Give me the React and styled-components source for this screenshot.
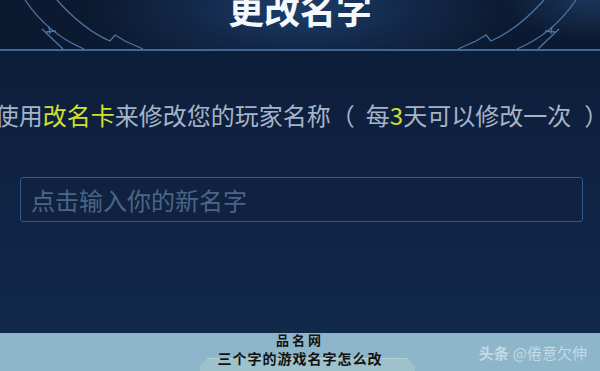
import React from 'react';
import styled, { createGlobalStyle } from 'styled-components';

const Global = createGlobalStyle`
  html, body {
    margin: 0;
    padding: 0;
    background: #0d1c35;
  }
  body {
    font-family: "Noto Sans CJK SC", "Noto Sans", sans-serif;
  }
`;

const Screen = styled.div`
  width: 600px;
  height: 371px;
  display: flex;
  flex-direction: column;
  overflow: hidden;
  background: linear-gradient(180deg, #0d1c36 0%, #0f2242 45%, #112b4c 100%);
`;

const Header = styled.header`
  position: relative;
  height: 49px;
  flex: none;
  display: flex;
  justify-content: center;
  border-bottom: 2px solid #3b6a9e;
  background:
    radial-gradient(ellipse 210px 70px at 300px 10px, #1c3d69 0%, rgba(22, 48, 86, 0.6) 55%, rgba(13, 27, 50, 0) 100%),
    radial-gradient(ellipse 90px 40px at 590px 0px, rgba(40, 80, 130, 0.5) 0%, rgba(13, 27, 50, 0) 100%),
    #0c1a31;
`;

const Ornament = styled.svg`
  position: absolute;
  left: 0;
  top: 0;
  width: 600px;
  height: 50px;
  pointer-events: none;
`;

const Title = styled.h1`
  position: relative;
  margin: -10px 0 0;
  font-size: 36px;
  line-height: 36px;
  font-weight: 700;
  color: #f4f7fb;
`;

const Body = styled.main`
  flex: 1;
  display: flex;
  flex-direction: column;
  align-items: center;
  padding-top: 49px;
`;

const Hint = styled.p`
  margin: 0 0 0 3px;
  display: flex;
  white-space: nowrap;
  font-size: 24px;
  line-height: 30px;
  color: #a5b4c8;
`;

const Mark = styled.span`
  color: #d3e02c;
`;

const Paren = styled.span`
  margin-left: ${(p) => p.$gap}px;
`;

const Field = styled.input`
  box-sizing: border-box;
  margin: 47px 0 0 3px;
  width: 563px;
  height: 45px;
  padding: 0 10px;
  border: 1.5px solid #31598a;
  border-radius: 3px;
  background: #10223f;
  font-family: inherit;
  font-size: 24px;
  color: #c9d6e6;
  outline: none;
  &::placeholder {
    color: #4b6589;
  }
`;

const Footer = styled.footer`
  position: relative;
  height: 38px;
  flex: none;
  background: #8db6ca;
  display: flex;
  flex-direction: column;
  align-items: center;
  &::before {
    content: '';
    position: absolute;
    left: 200px;
    top: 25px;
    width: 215px;
    height: 20px;
    background: #9dc2cc;
    border-top: 1px solid #b4d2d4;
    clip-path: polygon(8px 0, calc(100% - 8px) 0, 100% 8px, 100% 100%, 0 100%, 0 8px);
  }
`;

const Caption = styled.div`
  position: relative;
  font-size: ${(p) => p.$size}px;
  line-height: 18px;
  font-weight: 700;
  color: #121212;
  letter-spacing: ${(p) => p.$space}px;
  margin-top: ${(p) => p.$top}px;
`;

const Watermark = styled.div`
  position: absolute;
  right: 13px;
  top: 10px;
  font-size: 15px;
  line-height: 20px;
  color: rgba(235, 243, 247, 0.6);
  b {
    font-weight: 700;
    margin-right: 4px;
  }
`;

const Arcs = () => (
  <g fill="none" stroke="#4d76a6" strokeWidth="1.3">
    <path d="M25 0 Q48 34 84 49" />
    <path d="M57 0 Q84 30 110 41 L115 35 L125 41 L143 49" />
    <path d="M42 29 L63 49" />
    <path d="M49 27 L50 34 M46 32 L56 31" />
  </g>
);

export default function App() {
  return (
    <>
      <Global />
      <Screen>
        <Header>
          <Ornament viewBox="0 0 600 50">
            <Arcs />
            <g transform="translate(601 0) scale(-1 1)">
              <Arcs />
            </g>
          </Ornament>
          <Title>更改名字</Title>
        </Header>
        <Body>
          <Hint>
            使用<Mark>改名卡</Mark>来修改您的玩家名称
            <Paren $gap={0}>（</Paren>
            <Paren $gap={11}>每</Paren>
            <Mark>3</Mark>天可以修改一次<Paren $gap={13}>）</Paren>
          </Hint>
          <Field placeholder="点击输入你的新名字" />
        </Body>
        <Footer>
          <Caption $size={13} $space={3} $top={-2}>品名网</Caption>
          <Caption $size={14} $space={1} $top={0}>三个字的游戏名字怎么改</Caption>
          <Watermark>
            <b>头条</b>@倦意欠伸
          </Watermark>
        </Footer>
      </Screen>
    </>
  );
}
